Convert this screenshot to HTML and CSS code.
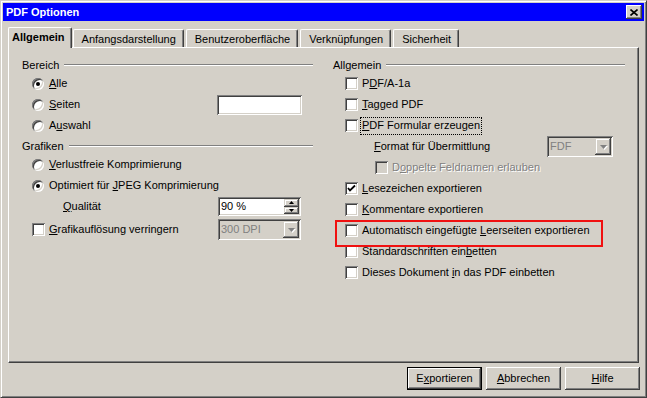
FILE: index.html
```html
<!DOCTYPE html>
<html lang="de">
  <head>
    <meta charset="UTF-8" />
    <title>PDF Optionen</title>
    <link rel="stylesheet" href="styles.css">
  </head>
  <body>
    <div class="dialog">
      <div class="titlebar">
        <span class="title">PDF Optionen</span>
        <span class="close-btn">
          <svg width="8" height="7" viewBox="0 0 8 7"><path d="M0.5 0.5l7 6M7.5 0.5l-7 6" stroke="#000" stroke-width="1.6" fill="none"/></svg>
        </span>
      </div>

      <div class="tabs">
        <div class="tab active">Allgemein</div>
        <div class="tab">Anfangsdarstellung</div>
        <div class="tab">Benutzeroberfläche</div>
        <div class="tab">Verknüpfungen</div>
        <div class="tab">Sicherheit</div>
      </div>

      <div class="panel">
        <!-- left column -->
        <div class="column left">
          <div class="group-title">Bereich</div>
          <div class="row">
            <span class="radio checked"></span>
            <span class="label"><u>A</u>lle</span>
          </div>
          <div class="row">
            <span class="radio"></span>
            <span class="label"><u>S</u>eiten</span>
            <span class="textfield"></span>
          </div>
          <div class="row">
            <span class="radio"></span>
            <span class="label">A<u>u</u>swahl</span>
          </div>

          <div class="group-title spaced">Grafiken</div>
          <div class="row">
            <span class="radio"></span>
            <span class="label"><u>V</u>erlustfreie Komprimierung</span>
          </div>
          <div class="row">
            <span class="radio checked"></span>
            <span class="label">Optimiert für <u>J</u>PEG Komprimierung</span>
          </div>
          <div class="row indent">
            <span class="label"><u>Q</u>ualität</span>
            <span class="spin">
              <span class="spin-value">90 %</span>
              <span class="spin-buttons">
                <span class="small-btn"><svg width="5" height="3" viewBox="0 0 5 3"><path d="M2.5 0L5 3H0z"/></svg></span>
                <span class="small-btn"><svg width="5" height="3" viewBox="0 0 5 3"><path d="M0 0h5L2.5 3z"/></svg></span>
              </span>
            </span>
          </div>
          <div class="row tall">
            <span class="checkbox"></span>
            <span class="label"><u>G</u>rafikauflösung verringern</span>
            <span class="combo wide">
              <span class="combo-value">300 DPI</span>
              <span class="small-btn combo-btn"><svg width="7" height="4" viewBox="0 0 7 4"><path d="M0 0h7L3.5 4z"/></svg></span>
            </span>
          </div>
        </div>

        <!-- right column -->
        <div class="column right">
          <div class="group-title">Allgemein</div>
          <div class="row">
            <span class="checkbox"></span>
            <span class="label">P<u>D</u>F/A-1a</span>
          </div>
          <div class="row">
            <span class="checkbox"></span>
            <span class="label"><u>T</u>agged PDF</span>
          </div>
          <div class="row">
            <span class="checkbox"></span>
            <span class="label focused"><u>P</u>DF Formular erzeugen</span>
          </div>
          <div class="row indent">
            <span class="label"><u>F</u>ormat für Übermittlung</span>
            <span class="combo narrow">
              <span class="combo-value">FDF</span>
              <span class="small-btn combo-btn"><svg width="7" height="4" viewBox="0 0 7 4"><path d="M0 0h7L3.5 4z"/></svg></span>
            </span>
          </div>
          <div class="row indent-box">
            <span class="checkbox disabled"></span>
            <span class="label disabled">D<u>o</u>ppelte Feldnamen erlauben</span>
          </div>
          <div class="row">
            <span class="checkbox">
              <svg width="13" height="13" viewBox="0 0 13 13"><path d="M3 6l2 2.5L10 3.5" stroke="#000" stroke-width="1.8" fill="none"/></svg>
            </span>
            <span class="label"><u>L</u>esezeichen exportieren</span>
          </div>
          <div class="row">
            <span class="checkbox"></span>
            <span class="label"><u>K</u>ommentare exportieren</span>
          </div>
          <div class="row marked">
            <span class="checkbox"></span>
            <span class="label">Automatisch eingefügte <u>L</u>eerseiten exportieren</span>
          </div>
          <div class="row">
            <span class="checkbox"></span>
            <span class="label">Standardschriften ein<u>b</u>etten</span>
          </div>
          <div class="row">
            <span class="checkbox"></span>
            <span class="label">Dieses Dokument <u>i</u>n das PDF einbetten</span>
          </div>
        </div>
      </div>

      <div class="buttons">
        <span class="btn default">E<u>x</u>portieren</span>
        <span class="btn"><u>A</u>bbrechen</span>
        <span class="btn"><u>H</u>ilfe</span>
      </div>
    </div>
  </body>
</html>
```

FILE: styles.css
```css
/* Global styles */
* {
  margin: 0;
  padding: 0;
  box-sizing: border-box;
}

:root {
  --face: #d4d0c8;
  --shadow: #808080;
  --darkShadow: #404040;
  --highlight: #ffffff;
  --titleBlue: #0000fe;
  --marker: #f01010;
}

body {
  background-color: var(--face);
  font: 11px/13px "Liberation Sans", Arial, sans-serif;
  color: #000;
}

u {
  text-decoration-thickness: 1px;
  text-underline-offset: 1px;
}

/* Window frame */
.dialog {
  width: 647px;
  height: 398px;
  display: flex;
  flex-direction: column;
  padding: 2px;
  background-color: var(--face);
  border: 1px solid;
  border-color: var(--face) var(--darkShadow) var(--darkShadow) var(--face);
  box-shadow: inset 1px 1px var(--highlight), inset -1px -1px var(--shadow);
}

.titlebar {
  height: 18px;
  display: flex;
  align-items: center;
  justify-content: space-between;
  padding: 0 2px 0 3px;
  background-color: var(--titleBlue);
  color: #fff;
  font-weight: bold;
}

.close-btn {
  width: 16px;
  height: 14px;
  display: flex;
  align-items: center;
  justify-content: center;
  background-color: var(--face);
  box-shadow: inset -1px -1px var(--darkShadow), inset 1px 1px var(--highlight),
    inset -2px -2px var(--shadow);
}

/* Tabs */
.tabs {
  height: 20px;
  display: flex;
  align-items: flex-end;
  margin: 6px 5px 0;
  position: relative;
  z-index: 1;
}

.tab {
  height: 18px;
  display: flex;
  align-items: center;
  padding: 1px 7px 0 8px;
  margin-left: 2px;
  border-top: 1px solid var(--highlight);
  border-left: 1px solid var(--highlight);
  border-right: 1px solid var(--darkShadow);
  border-radius: 2px 2px 0 0;
  box-shadow: inset -1px 0 var(--shadow);
  background-color: var(--face);
}

.tab.active {
  height: 21px;
  margin: 0 -1px -1px 0;
  padding: 0 6px 1px 3px;
  font-weight: bold;
}

/* Tab page */
.panel {
  height: 316px;
  margin: 0 5px;
  padding: 9px 0 0 13px;
  display: grid;
  grid-template-columns: 291px 292px;
  column-gap: 20px;
  align-content: start;
  border: 1px solid;
  border-color: var(--highlight) var(--darkShadow) var(--darkShadow) var(--highlight);
  box-shadow: inset -1px -1px var(--shadow);
}

.group-title {
  height: 16px;
  display: flex;
  align-items: center;
}

.group-title::after {
  content: "";
  flex: 1;
  margin-left: 5px;
  border-top: 1px solid var(--shadow);
  border-bottom: 1px solid var(--highlight);
}

.group-title.spaced {
  margin-top: 2px;
}

.row {
  height: 21px;
  display: flex;
  align-items: center;
  padding-left: 10px;
}

.row.tall {
  height: 23px;
  padding-top: 2px;
}

.right .row {
  padding-left: 12px;
}

.left .row.indent,
.right .row.indent {
  padding-left: 41px;
}

.right .row.indent-box {
  padding-left: 42px;
}

.label {
  white-space: nowrap;
}

.label.disabled {
  color: var(--shadow);
  text-shadow: 1px 1px var(--highlight);
}

.label.focused {
  outline: 1px dotted #000;
  outline-offset: 0;
  padding: 1px 1px 2px;
  margin-left: -1px;
}

/* red annotation frame */
.row.marked {
  position: relative;
}

.row.marked::after {
  content: "";
  position: absolute;
  top: 0;
  left: 2px;
  width: 264px;
  height: 23px;
  border: 2px solid var(--marker);
}

/* Radios and checkboxes */
.radio {
  flex: none;
  width: 12px;
  height: 12px;
  margin-right: 5px;
  border-radius: 50%;
  background-color: #fff;
  position: relative;
  box-shadow: inset 1px 1px var(--shadow), inset -1px -1px var(--highlight),
    inset 2px 2px var(--darkShadow), inset -2px -2px var(--face);
}

.radio.checked::after {
  content: "";
  position: absolute;
  top: 4px;
  left: 4px;
  width: 4px;
  height: 4px;
  border-radius: 50%;
  background-color: #000;
}

.checkbox {
  flex: none;
  width: 13px;
  height: 13px;
  margin-right: 4px;
  display: flex;
  background-color: #fff;
  box-shadow: inset 1px 1px var(--shadow), inset -1px -1px var(--highlight),
    inset 2px 2px var(--darkShadow), inset -2px -2px var(--face);
}

.checkbox.disabled {
  background-color: var(--face);
}

/* Fields */
.textfield,
.spin,
.combo {
  margin-left: auto;
  margin-right: 12px;
  display: flex;
  padding: 2px;
  box-shadow: inset 1px 1px var(--shadow), inset -1px -1px var(--highlight),
    inset 2px 2px var(--darkShadow), inset -2px -2px var(--face);
}

.textfield {
  width: 85px;
  height: 20px;
  margin-right: 11px;
  background-color: #fff;
}

.spin {
  width: 83px;
  height: 19px;
  background-color: #fff;
}

.spin-value {
  flex: 1;
  padding-left: 1px;
  line-height: 15px;
}

.spin-buttons {
  width: 15px;
  display: flex;
  flex-direction: column;
}

.small-btn {
  flex: 1;
  display: flex;
  align-items: center;
  justify-content: center;
  background-color: var(--face);
  box-shadow: inset -1px -1px var(--darkShadow), inset 1px 1px var(--face),
    inset -2px -2px var(--shadow), inset 2px 2px var(--highlight);
}

.combo {
  height: 21px;
  background-color: var(--face);
  color: var(--shadow);
}

.combo.wide {
  width: 83px;
}

.combo.narrow {
  width: 66px;
}

.combo-value {
  flex: 1;
  padding-left: 1px;
  line-height: 17px;
}

.combo-btn {
  flex: none;
  width: 16px;
}

.combo-btn svg {
  fill: var(--shadow);
  filter: drop-shadow(1px 1px 0 var(--highlight));
}

/* Dialog buttons */
.buttons {
  display: flex;
  justify-content: flex-end;
  gap: 4px;
  margin: 4px 4px 0 0;
}

.btn {
  width: 75px;
  height: 23px;
  display: flex;
  align-items: center;
  justify-content: center;
  background-color: var(--face);
  box-shadow: inset -1px -1px var(--darkShadow), inset 1px 1px var(--highlight),
    inset -2px -2px var(--shadow);
}

.btn.default {
  border: 1px solid #000;
}
```
